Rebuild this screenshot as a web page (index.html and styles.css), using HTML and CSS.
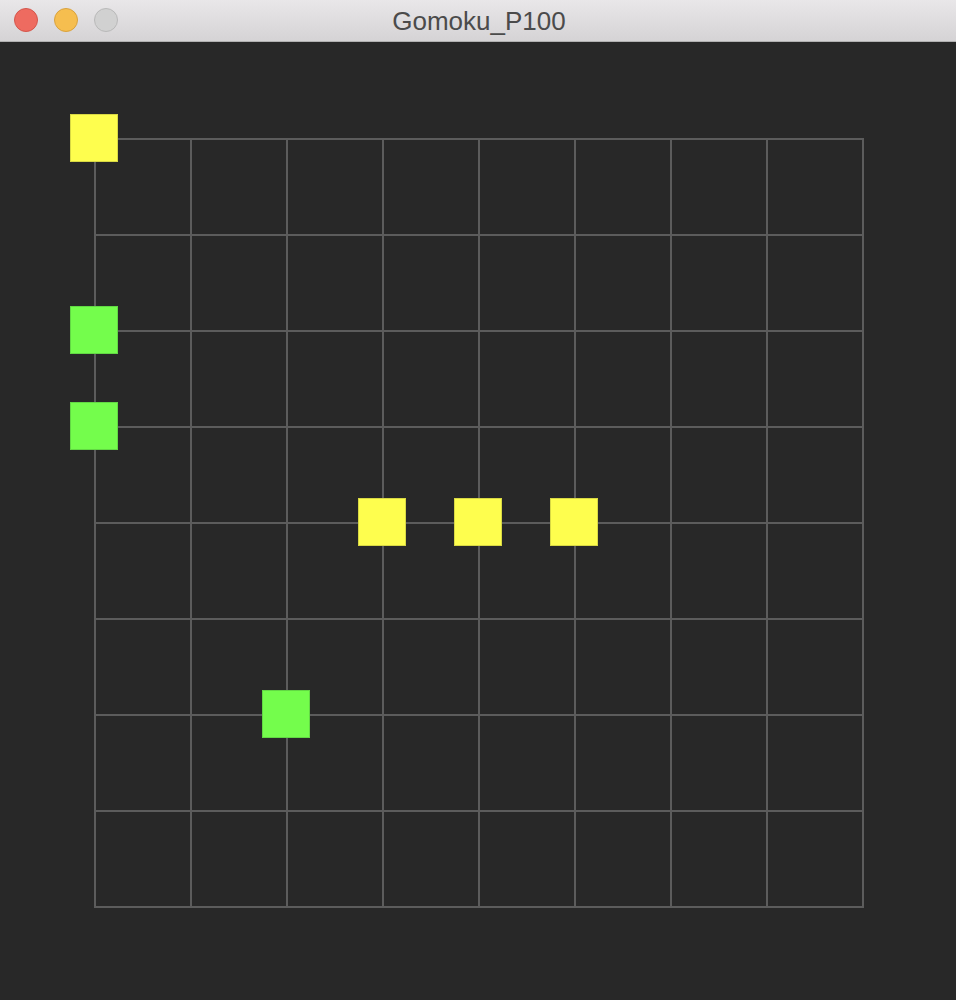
FILE: index.html
```html
<!DOCTYPE html>
<html>
<head>
<meta charset="utf-8">
<link rel="stylesheet" href="styles.css">
<title>Gomoku_P100</title>
</head>
<body>
<div class="window">
  <div class="titlebar">
    <div class="lights">
      <span class="light red"></span>
      <span class="light yellow"></span>
      <span class="light gray"></span>
    </div>
    <div class="title">Gomoku_P100</div>
  </div>
  <div class="canvas">
    <div class="board">
      <div class="stone s-yellow" style="left:-24px;top:-24px"></div>
      <div class="stone s-green" style="left:-24px;top:168px"></div>
      <div class="stone s-green" style="left:-24px;top:264px"></div>
      <div class="stone s-yellow" style="left:264px;top:360px"></div>
      <div class="stone s-yellow" style="left:360px;top:360px"></div>
      <div class="stone s-yellow" style="left:456px;top:360px"></div>
      <div class="stone s-green" style="left:168px;top:552px"></div>
    </div>
  </div>
</div>
</body>
</html>
```
FILE: styles.css
```css
html, body {
  margin: 0;
  padding: 0;
  width: 956px;
  height: 1000px;
  overflow: hidden;
  background: #282828;
}
.window {
  width: 956px;
  height: 1000px;
  display: flex;
  flex-direction: column;
}
.titlebar {
  position: relative;
  height: 41px;
  flex: none;
  background: linear-gradient(to bottom, #e9e7e9 0%, #d5d3d5 100%);
  border-bottom: 1px solid #b1b1b1;
  display: flex;
  align-items: center;
  justify-content: center;
}
.lights {
  position: absolute;
  left: 14px;
  top: 8px;
  display: flex;
  gap: 16px;
}
.light {
  width: 22px;
  height: 22px;
  border-radius: 50%;
  display: block;
  border: 1px solid;
}
.red { background: #ee6b60; border-color: #d4564c; }
.yellow { background: #f6be4f; border-color: #d9a23e; }
.gray { background: #d1d1d1; border-color: #b9b9b9; }
.title {
  font-family: "Liberation Sans", Arial, sans-serif;
  font-size: 26px;
  color: #4b4b4b;
  margin-top: 1px;
  margin-left: 2px;
}
.canvas {
  flex: 1;
  background: #282828;
  padding: 96px 0 0 94px;
}
.board {
  position: relative;
  width: 770px;
  height: 770px;
  background-image:
    repeating-linear-gradient(to right, #5c5c5c 0, #5c5c5c 2px, transparent 2px, transparent 96px),
    repeating-linear-gradient(to bottom, #5c5c5c 0, #5c5c5c 2px, transparent 2px, transparent 96px);
}
.stone {
  position: absolute;
  width: 48px;
  height: 48px;
  box-sizing: border-box;
  border: 1px solid rgba(0, 0, 0, 0.25);
}
.s-yellow { background: #fefe4e; border-color: #d8d844; }
.s-green { background: #74fd4c; border-color: #62d844; }
```
